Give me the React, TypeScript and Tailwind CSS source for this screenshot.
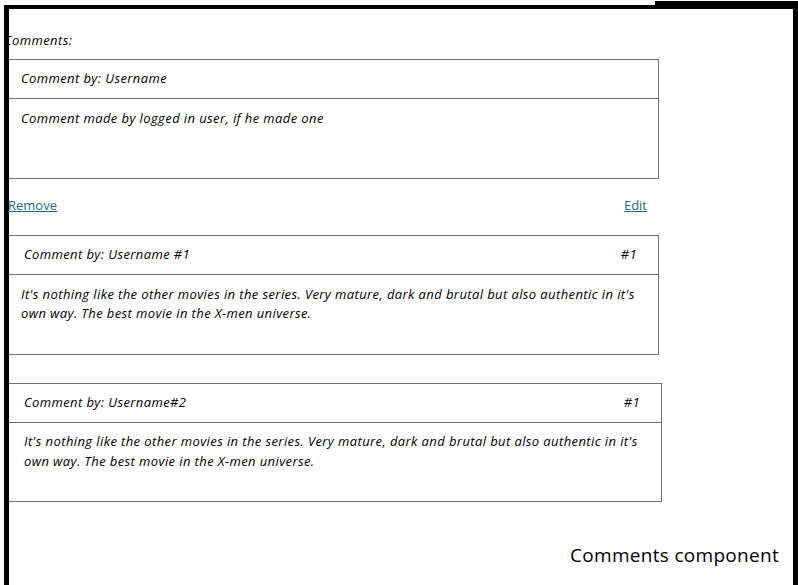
export default function App() {
  const font = { fontFamily: '"Open Sans", "Noto Sans", sans-serif' };
  return (
    <div className="relative flex h-[585px] w-[798px] items-start overflow-hidden bg-white text-black" style={font}>
      <div className="ml-[4px] mt-[5px] flex h-[580px] w-[789px] flex-col border-l-[5px] border-t-[4px] border-black">
        <p className="-ml-[5px] mt-[21px] h-[20px] text-[13px] italic leading-[20px] tracking-[0.4px]">Comments:</p>

        <div className="mt-[9px] w-[650px] border border-l-0 border-[#707070]">
          <div className="flex h-[39px] items-center border-b border-[#707070] pl-[12px] text-[13px] italic tracking-[0.4px]">
            Comment by: Username
          </div>
          <div className="h-[79px] pl-[12px] pt-[10px] text-[13px] italic leading-[19px] tracking-[0.4px]">
            Comment made by logged in user, if he made one
          </div>
        </div>

        <div className="-ml-[1px] mt-[16px] flex h-[20px] w-[639px] items-center justify-between text-[13px] leading-[20px] text-[#1f6b8a]">
          <a className="underline">Remove</a>
          <a className="underline">Edit</a>
        </div>

        <div className="mt-[20px] w-[650px] border border-l-0 border-[#707070]">
          <div className="flex h-[39px] items-center justify-between border-b border-[#707070] pl-[15px] pr-[21px] text-[13px] italic tracking-[0.4px]">
            <span>Comment by: Username #1</span>
            <span>#1</span>
          </div>
          <div className="h-[79px] whitespace-nowrap pl-[12px] pt-[10px] text-[13px] italic leading-[19px] tracking-[0.4px]">
            It's nothing like the other movies in the series. Very mature, dark and brutal but also authentic in it's
            <br />
            own way. The best movie in the X-men universe.
          </div>
        </div>

        <div className="mt-[28px] w-[653px] border border-l-0 border-[#707070]">
          <div className="flex h-[39px] items-center justify-between border-b border-[#707070] pl-[15px] pr-[21px] text-[13px] italic tracking-[0.4px]">
            <span>Comment by: Username#2</span>
            <span>#1</span>
          </div>
          <div className="h-[78px] whitespace-nowrap pl-[15px] pt-[8px] text-[13px] italic leading-[20px] tracking-[0.4px]">
            It's nothing like the other movies in the series. Very mature, dark and brutal but also authentic in it's
            <br />
            own way. The best movie in the X-men universe.
          </div>
        </div>

        <p className="mr-[14px] mt-[41px] h-[24px] self-end text-[19px] leading-[24px] tracking-[0.3px]">Comments component</p>
      </div>
      <div className="mt-[1px] h-[584px] w-[5px] bg-black" />
      <div className="absolute left-[655px] top-[1px] h-[5px] w-[140px] bg-black" />
    </div>
  );
}
